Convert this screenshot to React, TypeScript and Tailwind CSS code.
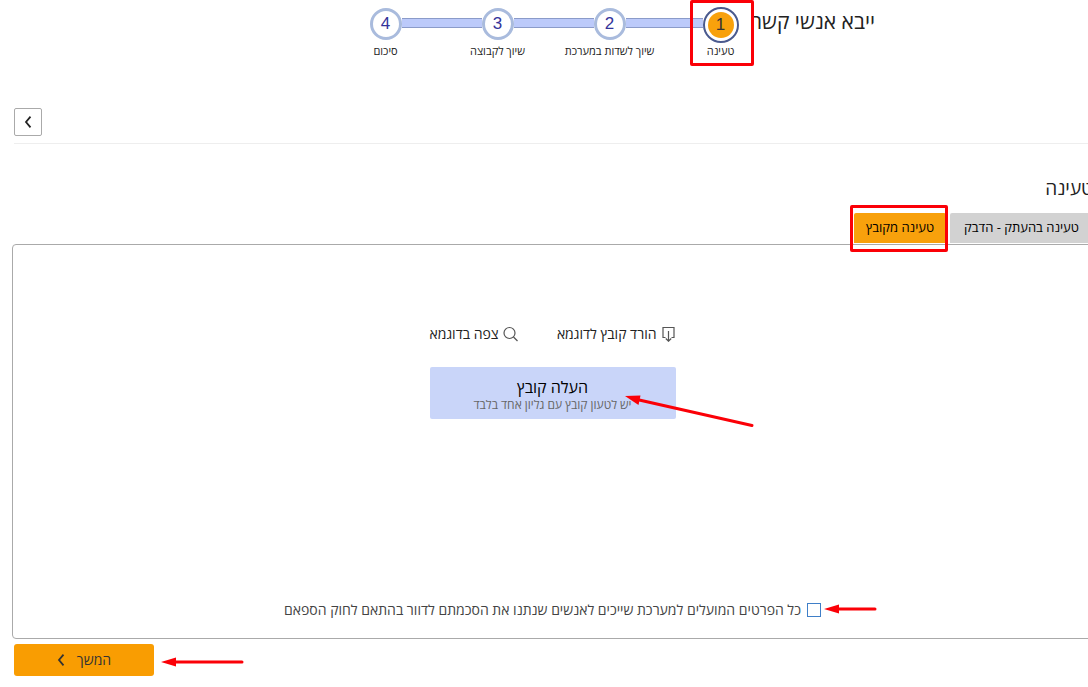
import React, { useState } from 'react';
import clsx from 'clsx';

interface Step {
  number: number;
  label: string;
}

const steps: Step[] = [
  { number: 1, label: 'טעינה' },
  { number: 2, label: 'שיוך לשדות במערכת' },
  { number: 3, label: 'שיוך לקבוצה' },
  { number: 4, label: 'סיכום' },
];

const Highlight = ({ className }: { className: string }) => (
  <span aria-hidden="true" className={clsx('pointer-events-none absolute z-10 rounded-xs border-[3px] border-[#fb0007]', className)} />
);

const ChevronLeft = () => (
  <svg width="8" height="12" viewBox="0 0 8 12" fill="none" stroke="currentColor" strokeWidth="1.800" aria-hidden="true">
    <path d="M6.500.7 2 6l4.500 5.300" />
  </svg>
);

const Arrow = ({ length, className }: { length: number; className: string }) => (
  <svg
    width={length}
    height="12"
    viewBox={`0 0 ${length} 12`}
    aria-hidden="true"
    className={clsx('pointer-events-none absolute', className)}
  >
    <path d={`M12 6H${length - 2}`} stroke="#fb0007" strokeWidth="3" strokeLinecap="round" />
    <path d="M0 6 15 1.500v9z" fill="#fb0007" />
  </svg>
);

const Stepper = ({ current }: { current: number }) => (
  <ol className="flex items-start">
    {steps.map((step, index) => (
      <React.Fragment key={step.number}>
        {index > 0 && (
          <li
            aria-hidden="true"
            className={clsx('mt-[11px] h-[10px] border-y border-[#8b9bc9] bg-[#bccafa]', index === current ? 'w-[77px]' : 'w-20')}
          />
        )}
        <li
          aria-current={step.number === current ? 'step' : undefined}
          className={clsx('relative flex h-[52px] flex-col items-center justify-between', step.number === current ? 'w-9' : 'w-8')}
        >
          {step.number === current ? (
            <span className="flex size-9 shrink-0 items-center justify-center rounded-full border-2 border-[#4a5a8e] bg-white">
              <span className="flex size-[26px] items-center justify-center rounded-full bg-[#f8a10c] font-['Liberation_Sans',sans-serif] text-[17px] text-[#333]">
                {step.number}
              </span>
            </span>
          ) : (
            <span className="mt-px flex size-8 shrink-0 items-center justify-center rounded-full border-3 border-[#a9bbdd] bg-white font-['Liberation_Sans',sans-serif] text-[17px] text-[#33339a]">
              {step.number}
            </span>
          )}
          <span className="text-[11px] leading-4 whitespace-nowrap text-[#222]">{step.label}</span>
          {step.number === current && <Highlight className="-top-[7px] -right-[15px] h-[66px] w-16" />}
        </li>
      </React.Fragment>
    ))}
  </ol>
);

export default function App() {
  const [tab, setTab] = useState<'file' | 'paste'>('file');
  const [approved, setApproved] = useState(false);

  return (
    <div dir="rtl" lang="he" className="min-h-screen overflow-hidden bg-white font-['Open_Sans','Noto_Sans',sans-serif] text-[#222]">
      <div className="-mr-[5px] pl-3">
        <header className="flex items-start gap-[13px] pt-[7px] pr-[218px]">
          <h1 className="text-[21px] leading-7 whitespace-nowrap">ייבא אנשי קשר</h1>
          <Stepper current={1} />
        </header>

        <div className="mt-[49px] ml-0.5 flex justify-end border-b border-[#eee] pb-[7px]">
          <button type="button" aria-label="חזרה" className="flex size-7 items-center justify-center rounded-xs border border-[#aaa] bg-white">
            <ChevronLeft />
          </button>
        </div>

        <main>
          <h2 className="mt-[29px] text-[19px] leading-[30px]">טעינה</h2>

          <div role="tablist" className="mt-[10px] flex gap-1 text-[13px] text-black">
            <button
              type="button"
              role="tab"
              aria-selected={tab === 'paste'}
              onClick={() => setTab('paste')}
              className="h-[30px] w-[143px] rounded-t-xs bg-[#d2d2d2]"
            >
              טעינה בהעתק - הדבק
            </button>
            <button
              type="button"
              role="tab"
              aria-selected={tab === 'file'}
              onClick={() => setTab('file')}
              className="relative h-[30px] w-[92px] rounded-t-xs bg-[#f8a10c]"
            >
              טעינה מקובץ
              <Highlight className="-top-2 -right-0.5 h-[47px] w-[98px]" />
            </button>
          </div>

          <section className="mt-px flex h-[395px] flex-col items-center rounded border border-[#aaa] pt-[79px] pb-[18px]">
            <div className="flex w-[246px] justify-between text-sm leading-5">
              <a href="#download" className="flex items-center gap-1">
                <svg width="15" height="16" viewBox="0 0 15 16" fill="none" stroke="#555" strokeWidth="1.200" aria-hidden="true">
                  <path d="M4.500 11.500h-2.500v-10h11v10h-2.500M7.500 5v10M4.800 12.500l2.700 2.700 2.700-2.700" />
                </svg>
                הורד קובץ לדוגמא
              </a>
              <a href="#preview" className="flex items-center gap-1">
                <svg width="15" height="16" viewBox="0 0 15 16" fill="none" stroke="#555" strokeWidth="1.200" aria-hidden="true">
                  <circle cx="6.500" cy="7" r="5.500" />
                  <path d="m10.500 11 4 4" />
                </svg>
                צפה בדוגמא
              </a>
            </div>

            <button type="button" className="relative mt-[23px] flex h-[52px] w-[246px] flex-col items-center justify-center rounded-xs bg-[#c9d5f9] pt-1">
              <span className="text-base leading-5 text-black">העלה קובץ</span>
              <span className="text-xs leading-4 text-[#666]">יש לטעון קובץ עם גליון אחד בלבד</span>
              <svg width="130" height="34" viewBox="0 0 130 34" aria-hidden="true" className="pointer-events-none absolute top-7 left-[195px]">
                <path d="M12 4.500 127 30.500" stroke="#fb0007" strokeWidth="3" strokeLinecap="round" />
                <path d="M0 1 15.500.5 13.500 10z" fill="#fb0007" />
              </svg>
            </button>

            <label className="relative mt-auto flex items-center gap-1.5 text-sm leading-5 text-[#444]">
              <input
                type="checkbox"
                checked={approved}
                onChange={(e) => setApproved(e.target.checked)}
                className="size-3.5 appearance-none border border-[#3f7fc8] bg-white checked:bg-[#3f7fc8]"
              />
              כל הפרטים המועלים למערכת שייכים לאנשים שנתנו את הסכמתם לדוור בהתאם לחוק הספאם
              <Arrow length={53} className="top-[3px] -right-14" />
            </label>
          </section>

          <div className="mt-[5px] ml-0.5 flex justify-end">
            <button type="button" className="relative flex h-8 w-[140px] items-center justify-center gap-3 rounded-[3px] bg-[#f99d02] text-sm text-[#333]">
              המשך
              <ChevronLeft />
              <Arrow length={83} className="top-3 left-[147px]" />
            </button>
          </div>
        </main>
      </div>
    </div>
  );
}
